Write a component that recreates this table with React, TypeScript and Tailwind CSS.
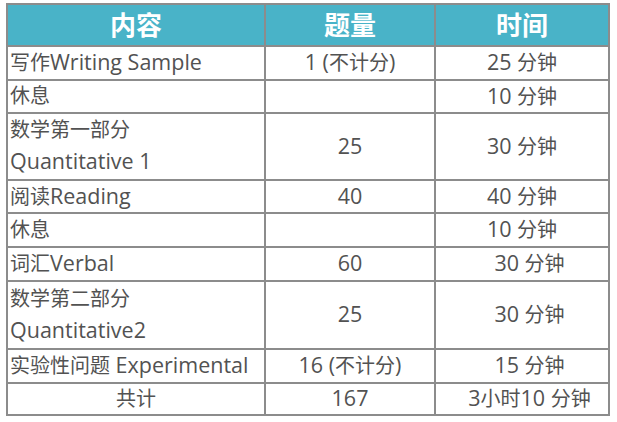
import React from "react";

type Row = { a: string[]; b: string; c: string; cShift?: boolean; center?: boolean };

const rows: Row[] = [
  { a: ["写作Writing Sample"], b: "1 (不计分)", c: "25 分钟" },
  { a: ["休息"], b: "", c: "10 分钟" },
  { a: ["数学第一部分", "Quantitative 1"], b: "25", c: "30 分钟" },
  { a: ["阅读Reading"], b: "40", c: "40 分钟" },
  { a: ["休息"], b: "", c: "10 分钟" },
  { a: ["词汇Verbal"], b: "60", c: "30 分钟", cShift: true },
  { a: ["数学第二部分", "Quantitative2"], b: "25", c: "30 分钟", cShift: true },
  { a: ["实验性问题 Experimental"], b: "16 (不计分)", c: "15 分钟", cShift: true },
  { a: ["共计"], b: "167", c: "3小时10 分钟", center: true, cShift: true },
];

function Mixed({ text }: { text: string }) {
  const parts = text.match(/[\u3400-\u9fff]+|[^\u3400-\u9fff]+/g) || [];
  return (
    <span className="whitespace-pre">
      {parts.map((p, i) =>
        /[\u3400-\u9fff]/.test(p) ? (
          <span key={i} className="text-[20px]">{p}</span>
        ) : (
          <span key={i} className="text-[21.5px]">{p}</span>
        )
      )}
    </span>
  );
}

export default function App() {
  return (
    <div className="w-[617px] h-[422px] bg-white pt-[3px] pl-[6px] font-['Open_Sans','Noto_Sans_CJK_SC',sans-serif] text-[#525252]">
      <div className="grid w-[604px] h-[413px] bg-[#8c8c8c] p-[2px] gap-[2px] grid-cols-[256px_168px_172px] grid-rows-[40px_32px_31px_65px_31px_32px_32px_66px_32px_30px]">
        {["内容", "题量", "时间"].map((h) => (
          <div key={h} className="bg-[#49b3c8] flex items-center justify-center text-white font-bold text-[26px] leading-none">
            {h}
          </div>
        ))}
        {rows.map((r, i) => (
          <React.Fragment key={i}>
            <div className={`bg-white flex items-center leading-[30px] ${r.center ? "justify-center" : "pl-[2px]"}`}>
              <div>
                {r.a.map((l, j) => (
                  <div key={j} className="whitespace-nowrap">
                    <Mixed text={l} />
                  </div>
                ))}
              </div>
            </div>
            <div className="bg-white flex items-center justify-center leading-[30px]">
              <Mixed text={r.b} />
            </div>
            <div className={`bg-white flex items-center justify-center leading-[30px] ${r.cShift ? "pl-[15px]" : ""}`}>
              <Mixed text={r.c} />
            </div>
          </React.Fragment>
        ))}
      </div>
    </div>
  );
}
